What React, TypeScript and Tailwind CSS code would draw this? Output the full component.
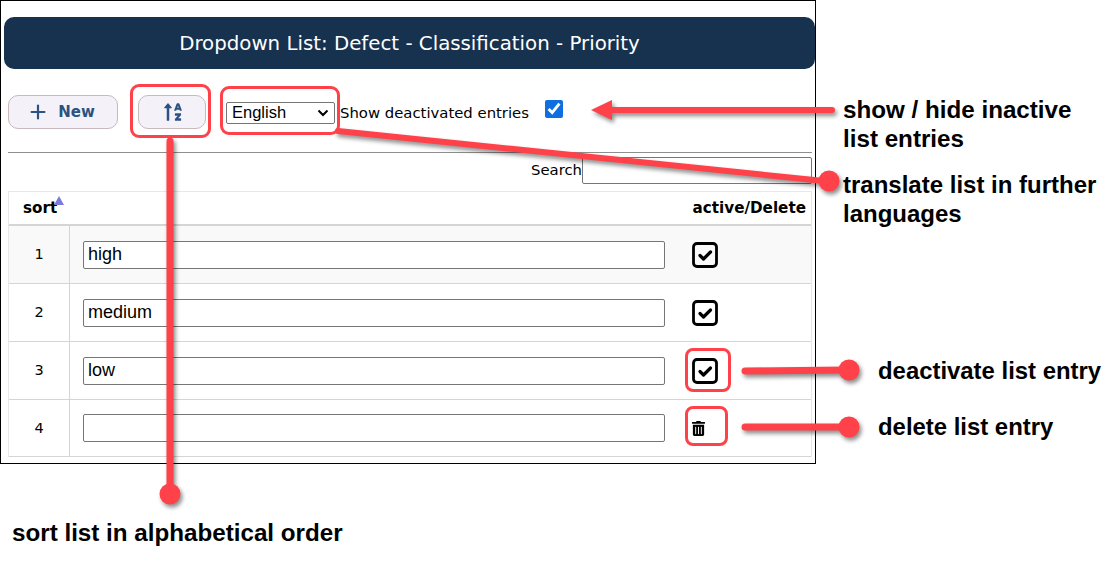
import { Plus } from "lucide-react";
import { FaSortAlphaUp, FaTrashAlt } from "react-icons/fa";

const rows = [
  { sort: 1, value: "high", shaded: true, height: "h-[58px]" },
  { sort: 2, value: "medium", height: "h-[58px]" },
  { sort: 3, value: "low", height: "h-[58px]" },
  { sort: 4, value: "", trash: true, height: "h-[57px]" },
];

function CheckIcon() {
  return (
    <svg width="28" height="28" viewBox="0 0 28 28" fill="none" className="block">
      <rect x="2.5" y="2.5" width="23" height="23" rx="3.5" stroke="#000" strokeWidth="2.8" />
      <path d="M9 14.5l3.5 3.5 7-7" stroke="#000" strokeWidth="3.2" strokeLinecap="round" strokeLinejoin="round" />
    </svg>
  );
}

function Callouts() {
  return (
    <svg width="1114" height="566" className="absolute left-0 top-0 pointer-events-none drop-shadow-[2px_3px_2px_rgba(0,0,0,0.45)]">
      {/* sort */}
      <line x1="170" y1="141" x2="170" y2="490" stroke="#ff414a" strokeWidth="7" strokeLinecap="round" />
      <circle cx="170" cy="494" r="10.5" fill="#ff414a" />
      {/* language */}
      <path d="M338 131 L824 181" stroke="#ff414a" strokeWidth="6" strokeLinecap="round" />
      <circle cx="829" cy="181" r="10.5" fill="#ff414a" />
      {/* show / hide */}
      <path d="M832 110 L610 110" stroke="#ff414a" strokeWidth="6" strokeLinecap="round" />
      <path d="M591 110 L612 100 L612 120 Z" fill="#ff414a" />
      {/* deactivate */}
      <path d="M745 371 L846 370" stroke="#ff414a" strokeWidth="7" strokeLinecap="round" />
      <circle cx="849" cy="370" r="10.5" fill="#ff414a" />
      {/* delete */}
      <path d="M745 427 L846 427" stroke="#ff414a" strokeWidth="7" strokeLinecap="round" />
      <circle cx="849" cy="427" r="10.5" fill="#ff414a" />
    </svg>
  );
}

export default function App() {
  return (
    <div className="relative w-[1114px] h-[566px] bg-white overflow-hidden font-['DejaVu_Sans',sans-serif] text-black">
      <div className="w-[816px] h-[464px] border border-black pt-4 pl-[3px] pr-0">
        <div className="h-[52px] rounded-[10px] bg-[#17324f] text-white flex items-center justify-center text-[19.8px] pt-[2px]">
          Dropdown List: Defect - Classification - Priority
        </div>

        <div className="ml-1 mr-1 mt-[26px] flex items-center h-[34px]">
          <button className="w-[110px] h-[34px] rounded-[10px] border border-[#c9b8bc] bg-[#f4f2f8] flex items-center justify-center gap-[9px] text-[#2c5282] font-bold text-[15px] pr-1">
            <Plus size={22} strokeWidth={2.4} />
            New
          </button>
          <button className="ml-5 w-[68px] h-[34px] rounded-[10px] border border-[#c9b8bc] bg-[#f4f2f8] flex items-center justify-center text-[#2c5282] pl-[1px]">
            <FaSortAlphaUp size={20} />
          </button>
          <div className="ml-5 mt-[1px] w-[109px] h-[22px] border border-[#767676] rounded-[2px] flex items-center justify-between pl-[5px] pr-[5px] font-['Liberation_Sans',sans-serif] text-[16.5px]">
            English
            <svg width="12" height="8" viewBox="0 0 12 8" fill="none">
              <path d="M1.5 1.5L6 6l4.5-4.5" stroke="#000" strokeWidth="2" />
            </svg>
          </div>
          <span className="ml-[5px] mt-[2px] text-[14.85px]">Show deactivated entries</span>
          <input type="checkbox" defaultChecked className="ml-[16px] mb-[6px] w-[18px] h-[18px] accent-[#0f6fe0]" />
        </div>

        <div className="ml-1 mr-[3px] mt-[23px] border-t border-[#8f8f8f]" />

        <div className="ml-1 mr-[3px] mt-1 flex items-center justify-end h-[27px] text-[14.85px]">
          Search
          <div className="w-[230px] h-[27px] border border-[#767676] rounded-[2px]" />
        </div>

        <div className="ml-1 mr-[3px] mt-[7px] border-x border-[#e8e8e8]">
          <div className="h-[35px] flex items-center justify-between border-y border-[#e8e8e8] border-b-[2px] border-b-[#d5d5d5] pl-[14px] pr-[5px] text-[15.2px] font-bold">
            <span className="relative">
              sort
              <span className="absolute -right-[7px] top-[-1px] w-0 h-0 border-x-[5px] border-x-transparent border-b-[9px] border-b-[#7b7bdc]" />
            </span>
            <span>active/Delete</span>
          </div>
          {rows.map((row) => (
            <div
              key={row.sort}
              className={`${row.height} flex items-center border-b border-[#d5d5d5] ${row.shaded ? "bg-[#f9f9f9]" : "bg-white"}`}
            >
              <div className="w-[61px] h-full shrink-0 border-r border-[#d5d5d5] flex items-center justify-center pt-[1px] text-[14.5px]">
                {row.sort}
              </div>
              <div className="ml-[13px] w-[582px] h-[28px] border border-[#767676] rounded-[2px] bg-white flex items-center pl-1 pb-[1px] font-['Liberation_Sans',sans-serif] text-[18px]">
                {row.value}
              </div>
              <div className="ml-[26px]">
                {row.trash ? <FaTrashAlt size={15} /> : <CheckIcon />}
              </div>
            </div>
          ))}
        </div>
      </div>

      <Callouts />

      {/* red highlight frames */}
      <div className="absolute left-[130px] top-[84px] w-[81px] h-[54px] border-[3px] border-[#ff414a] rounded-[9px]" />
      <div className="absolute left-[220px] top-[86px] w-[120px] h-[49px] border-[3px] border-[#ff414a] rounded-[9px]" />
      <div className="absolute left-[685px] top-[348px] w-[46px] h-[44px] border-[3px] border-[#ff414a] rounded-[8px]" />
      <div className="absolute left-[685px] top-[406px] w-[43px] h-[40px] border-[3px] border-[#ff414a] rounded-[8px]" />

      {/* callout labels */}
      <div className="absolute left-[843px] top-[95px] font-['Liberation_Sans',sans-serif] font-bold text-[24.2px] leading-[29px]">
        show / hide inactive
        <br />
        list entries
      </div>
      <div className="absolute left-[843px] top-[170px] font-['Liberation_Sans',sans-serif] font-bold text-[24px] leading-[29px]">
        translate list in further
        <br />
        languages
      </div>
      <div className="absolute left-[878px] top-[356px] font-['Liberation_Sans',sans-serif] font-bold text-[23.9px] leading-[29px]">
        deactivate list entry
      </div>
      <div className="absolute left-[878px] top-[412px] font-['Liberation_Sans',sans-serif] font-bold text-[23.9px] leading-[29px]">
        delete list entry
      </div>
      <div className="absolute left-[12px] top-[518px] font-['Liberation_Sans',sans-serif] font-bold text-[24.2px] leading-[29px]">
        sort list in alphabetical order
      </div>
    </div>
  );
}
